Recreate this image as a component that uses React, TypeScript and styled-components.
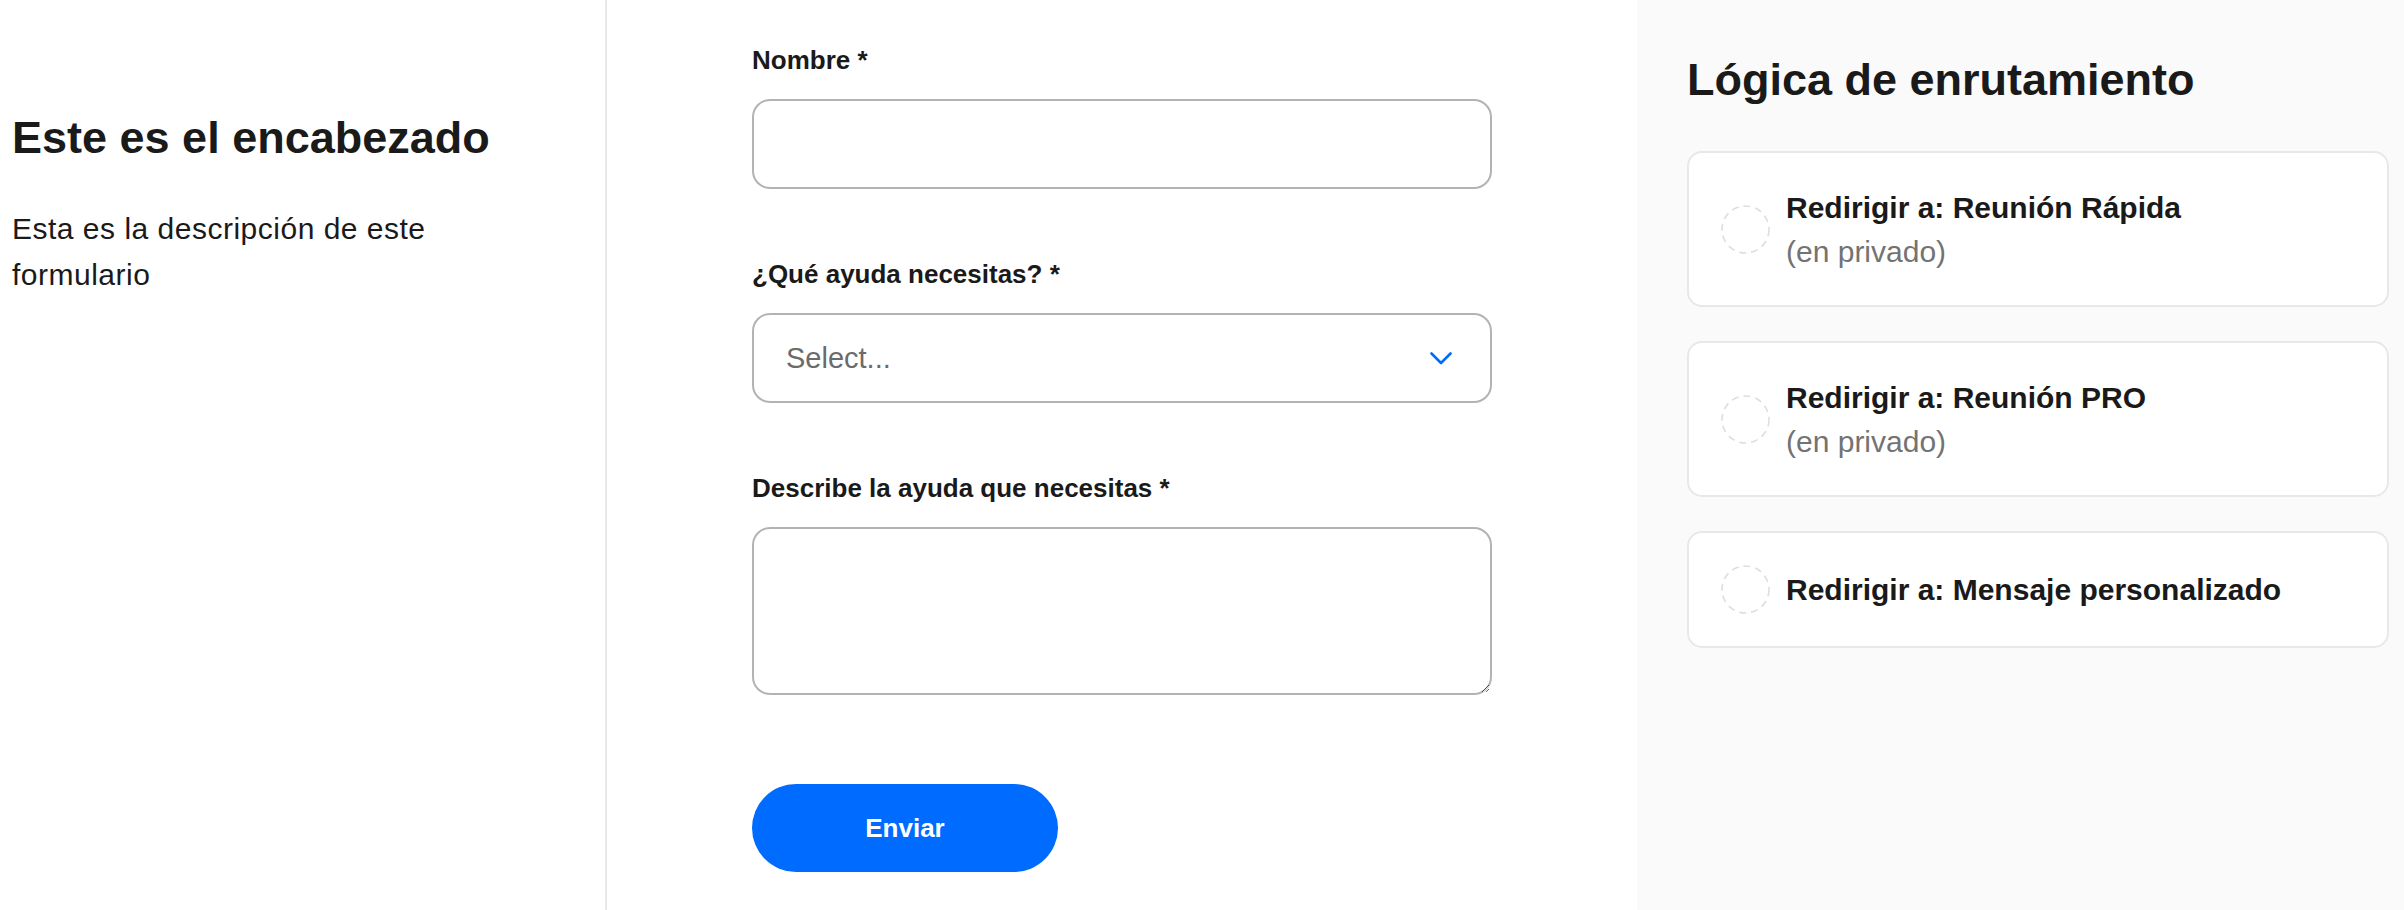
import styled, { createGlobalStyle } from 'styled-components';

const GlobalStyle = createGlobalStyle`
  * { box-sizing: border-box; }
  html, body {
    margin: 0;
    padding: 0;
    background: #ffffff;
    color: #1a1a1a;
    font-family: "Liberation Sans", Arial, sans-serif;
  }
`

const Page = styled.div`
  display: flex;
  flex-direction: row;
  min-height: 100vh;
`

const Intro = styled.section`
  width: 607px;
  flex-shrink: 0;
  padding: 111px 12px 0 12px;
  border-right: 2px solid #e8e8e8;
`

const Heading = styled.h1`
  margin: 0;
  font-size: 45px;
  line-height: 54px;
  font-weight: 700;
  color: #1a1a1a;
`

const Description = styled.p`
  margin: 41px 0 0 0;
  max-width: 470px;
  font-size: 30px;
  line-height: 46px;
  letter-spacing: 0.5px;
  font-weight: 400;
  color: #1a1a1a;
`

const FormPanel = styled.main`
  flex: 1;
  display: flex;
  justify-content: center;
  padding-top: 40px;
  background: #ffffff;
`

const Form = styled.form`
  width: 740px;
  display: flex;
  flex-direction: column;
`

const Field = styled.div<{ $last?: boolean }>`
  display: flex;
  flex-direction: column;
  margin-bottom: ${p => (p.$last ? '0' : '65px')};
`

const Label = styled.label`
  font-size: 26px;
  line-height: 40px;
  font-weight: 700;
  color: #1a1a1a;
  margin-bottom: 19px;
`

const Input = styled.input`
  height: 90px;
  width: 100%;
  border: 2px solid #b3b3b3;
  border-radius: 18px;
  padding: 0 32px;
  font-family: inherit;
  font-size: 29px;
  outline: none;
  background: #ffffff;
`

const SelectBox = styled.div`
  height: 90px;
  display: flex;
  align-items: center;
  justify-content: space-between;
  border: 2px solid #b3b3b3;
  border-radius: 18px;
  padding: 0 38px 0 32px;
  background: #ffffff;
  cursor: pointer;
`

const Placeholder = styled.span`
  font-size: 29px;
  color: #6b6b6b;
`

const TextArea = styled.textarea`
  display: block;
  height: 168px;
  width: 100%;
  border: 2px solid #b3b3b3;
  border-radius: 18px;
  padding: 16px 32px;
  font-family: inherit;
  font-size: 29px;
  outline: none;
  resize: vertical;
  background: #ffffff;
`

const SubmitButton = styled.button`
  margin-top: 89px;
  width: 306px;
  height: 88px;
  border: none;
  border-radius: 44px;
  background: #006bff;
  color: #ffffff;
  font-family: inherit;
  font-size: 26px;
  font-weight: 700;
  cursor: pointer;
`

const RoutingPanel = styled.aside`
  width: 767px;
  flex-shrink: 0;
  background: #fafafa;
  padding: 53px 15px 0 50px;
`

const RoutingList = styled.div`
  margin-top: 44px;
  display: flex;
  flex-direction: column;
  gap: 34px;
`

const RouteCard = styled.div`
  display: flex;
  align-items: center;
  gap: 16px;
  padding: 32px;
  background: #ffffff;
  border: 2px solid #e8e8e8;
  border-radius: 15px;
`

const RouteText = styled.div`
  display: flex;
  flex-direction: column;
`

const RouteTitle = styled.span`
  font-size: 30px;
  line-height: 45px;
  font-weight: 700;
  color: #1a1a1a;
`

const RouteNote = styled.span`
  font-size: 30px;
  line-height: 43px;
  color: #737373;
`

const Chevron = () => (
  <svg width="22" height="13" viewBox="0 0 22 13" fill="none">
    <path d="M1.5 1.5 L11 11 L20.5 1.5" stroke="#006bff" strokeWidth="2.6" strokeLinecap="round" strokeLinejoin="round" />
  </svg>
)

const DashedCircle = () => (
  <svg width="49" height="49" viewBox="0 0 49 49" fill="none" style={{ flexShrink: 0 }}>
    <circle cx="24.5" cy="24.5" r="23.5" stroke="#dedede" strokeWidth="1.6" strokeDasharray="7 5" />
  </svg>
)

const routes = [
  { title: 'Redirigir a: Reunión Rápida', note: '(en privado)' },
  { title: 'Redirigir a: Reunión PRO', note: '(en privado)' },
  { title: 'Redirigir a: Mensaje personalizado' },
];

function App() {
  return (
    <>
      <GlobalStyle />
      <Page>
        <Intro>
          <Heading>Este es el encabezado</Heading>
          <Description>Esta es la descripción de este formulario</Description>
        </Intro>
        <FormPanel>
          <Form onSubmit={(e) => e.preventDefault()}>
            <Field>
              <Label htmlFor="nombre">Nombre *</Label>
              <Input id="nombre" type="text" />
            </Field>
            <Field>
              <Label>¿Qué ayuda necesitas? *</Label>
              <SelectBox>
                <Placeholder>Select...</Placeholder>
                <Chevron />
              </SelectBox>
            </Field>
            <Field $last>
              <Label htmlFor="ayuda">Describe la ayuda que necesitas *</Label>
              <TextArea id="ayuda" />
            </Field>
            <SubmitButton type="submit">Enviar</SubmitButton>
          </Form>
        </FormPanel>
        <RoutingPanel>
          <Heading>Lógica de enrutamiento</Heading>
          <RoutingList>
            {routes.map(route => (
              <RouteCard key={route.title}>
                <DashedCircle />
                <RouteText>
                  <RouteTitle>{route.title}</RouteTitle>
                  {route.note && <RouteNote>{route.note}</RouteNote>}
                </RouteText>
              </RouteCard>
            ))}
          </RoutingList>
        </RoutingPanel>
      </Page>
    </>
  );
}

export default App;
